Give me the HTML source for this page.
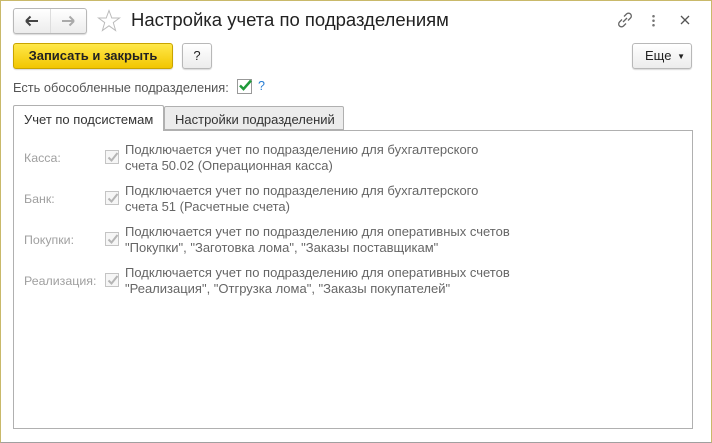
<!DOCTYPE html>
<html><head><meta charset="utf-8"><style>
*{box-sizing:border-box;margin:0;padding:0}
body{width:712px;height:443px;background:#fff;font-family:"Liberation Sans",Arial,sans-serif;font-size:12px;color:#333;position:relative;overflow:hidden}
.win{position:absolute;left:0;top:0;width:712px;height:443px;border:1px solid #c9b96a;border-bottom-color:#a0a0a0;border-right-color:#c9b96a}
.abs{position:absolute}
.btn{position:absolute;border:1px solid #b8b8b8;border-radius:3px;background:linear-gradient(#fff,#ececec);box-shadow:0 1px 1px rgba(0,0,0,.15)}
.lbl{color:#a0a0a0;font-size:12.4px}
.txt{color:#666;font-size:13px;line-height:16px}
.cb{position:absolute;width:14px;height:14px;border:1px solid #c4c4c4;background:#f6f6f6}
</style></head><body>
<div class="win"></div>
<div class="btn" style="left:13px;top:8px;width:74px;height:26px"></div>
<div class="abs" style="left:50px;top:9px;width:1px;height:24px;background:#ddd"></div>
<svg class="abs" style="left:25px;top:15px" width="14" height="12"><path d="M1 6H13M1 6L5.5 1.5M1 6L5.5 10.5" stroke="#444" stroke-width="2" fill="none"/></svg>
<svg class="abs" style="left:61px;top:15px" width="14" height="12"><path d="M13 6H1M13 6L8.5 1.5M13 6L8.5 10.5" stroke="#aaa" stroke-width="2" fill="none"/></svg>
<svg class="abs" style="left:97px;top:9px" width="24" height="24"><path d="M12 1.5L14.8 9H22.5L16.3 13.6L18.6 21.5L12 16.8L5.4 21.5L7.7 13.6L1.5 9H9.2Z" fill="none" stroke="#bbb" stroke-width="1"/></svg>
<div class="abs" style="left:131px;top:9px;font-size:18.5px;color:#222">Настройка учета по подразделениям</div>
<svg class="abs" style="left:616px;top:11px" width="18" height="18"><g fill="none" stroke="#666" stroke-width="1.3"><path d="M8 5.5L10.5 3a2.5 2.5 0 0 1 4 4L12 9.5"/><path d="M10 12.5L7.5 15a2.5 2.5 0 0 1-4-4L6 8.5"/><path d="M7 11L11 7"/></g></svg>
<div class="abs" style="left:652px;top:14px;width:3px;height:13px;background:radial-gradient(circle,#777 1.2px,transparent 1.4px) 0 0/3px 4.5px"></div>
<svg class="abs" style="left:680px;top:15px" width="10" height="10"><path d="M1 1L9 9M9 1L1 9" stroke="#555" stroke-width="1.3"/></svg>
<div class="btn" style="left:13px;top:43px;width:160px;height:26px;background:linear-gradient(#ffe84a,#f2c600);border-color:#c9a400;font-weight:bold;color:#222;font-size:13px;text-align:center;line-height:24px">Записать и закрыть</div>
<div class="btn" style="left:182px;top:43px;width:30px;height:26px;text-align:center;line-height:24px;font-size:13px;color:#222">?</div>
<div class="btn" style="left:632px;top:43px;width:60px;height:26px;font-size:13px;color:#222;line-height:24px;padding-left:12px">Еще <span style="font-size:8px;vertical-align:1px;margin-left:2px">▼</span></div>
<div class="abs" style="left:13px;top:80px;color:#555;font-size:12.8px">Есть обособленные подразделения:</div>
<div class="abs" style="left:237px;top:79px;width:15px;height:15px;border:1px solid #999;background:#fff"></div>
<svg class="abs" style="left:237px;top:77px" width="16" height="16"><path d="M3 8.5L6.5 12L14 3.5" stroke="#1f9a3a" stroke-width="2.5" fill="none"/></svg>
<div class="abs" style="left:258px;top:79px;color:#2a7fd4;font-size:12.5px">?</div>
<div class="abs" style="left:13px;top:130px;width:680px;height:299px;border:1px solid #b0b0b0"></div>
<div class="abs" style="left:13px;top:105px;width:151px;height:26px;border:1px solid #b0b0b0;border-bottom:none;background:#fff;border-radius:2px 2px 0 0;padding:6px 0 0 10px;font-size:13px;color:#333">Учет по подсистемам</div>
<div class="abs" style="left:164px;top:106px;width:180px;height:24px;border:1px solid #b0b0b0;background:#ececec;border-radius:2px 2px 0 0;padding:5px 0 0 10px;font-size:13px;color:#333">Настройки подразделений</div>

<div class="abs lbl" style="left:24px;top:151px">Касса:</div>
<div class="cb" style="left:105px;top:150px"></div>
<svg class="abs" style="left:105px;top:149px" width="16" height="16"><path d="M3.5 8.5L6.5 11.5L12.5 4" stroke="#b5b5b5" stroke-width="2" fill="none"/></svg>
<div class="abs txt" style="left:125px;top:142px">Подключается учет по подразделению для бухгалтерского<br>счета 50.02 (Операционная касса)</div>

<div class="abs lbl" style="left:24px;top:192px">Банк:</div>
<div class="cb" style="left:105px;top:191px"></div>
<svg class="abs" style="left:105px;top:190px" width="16" height="16"><path d="M3.5 8.5L6.5 11.5L12.5 4" stroke="#b5b5b5" stroke-width="2" fill="none"/></svg>
<div class="abs txt" style="left:125px;top:183px">Подключается учет по подразделению для бухгалтерского<br>счета 51 (Расчетные счета)</div>

<div class="abs lbl" style="left:24px;top:233px">Покупки:</div>
<div class="cb" style="left:105px;top:232px"></div>
<svg class="abs" style="left:105px;top:231px" width="16" height="16"><path d="M3.5 8.5L6.5 11.5L12.5 4" stroke="#b5b5b5" stroke-width="2" fill="none"/></svg>
<div class="abs txt" style="left:125px;top:224px">Подключается учет по подразделению для оперативных счетов<br>"Покупки", "Заготовка лома", "Заказы поставщикам"</div>

<div class="abs lbl" style="left:24px;top:274px">Реализация:</div>
<div class="cb" style="left:105px;top:273px"></div>
<svg class="abs" style="left:105px;top:272px" width="16" height="16"><path d="M3.5 8.5L6.5 11.5L12.5 4" stroke="#b5b5b5" stroke-width="2" fill="none"/></svg>
<div class="abs txt" style="left:125px;top:265px">Подключается учет по подразделению для оперативных счетов<br>"Реализация", "Отгрузка лома", "Заказы покупателей"</div>
</body></html>
